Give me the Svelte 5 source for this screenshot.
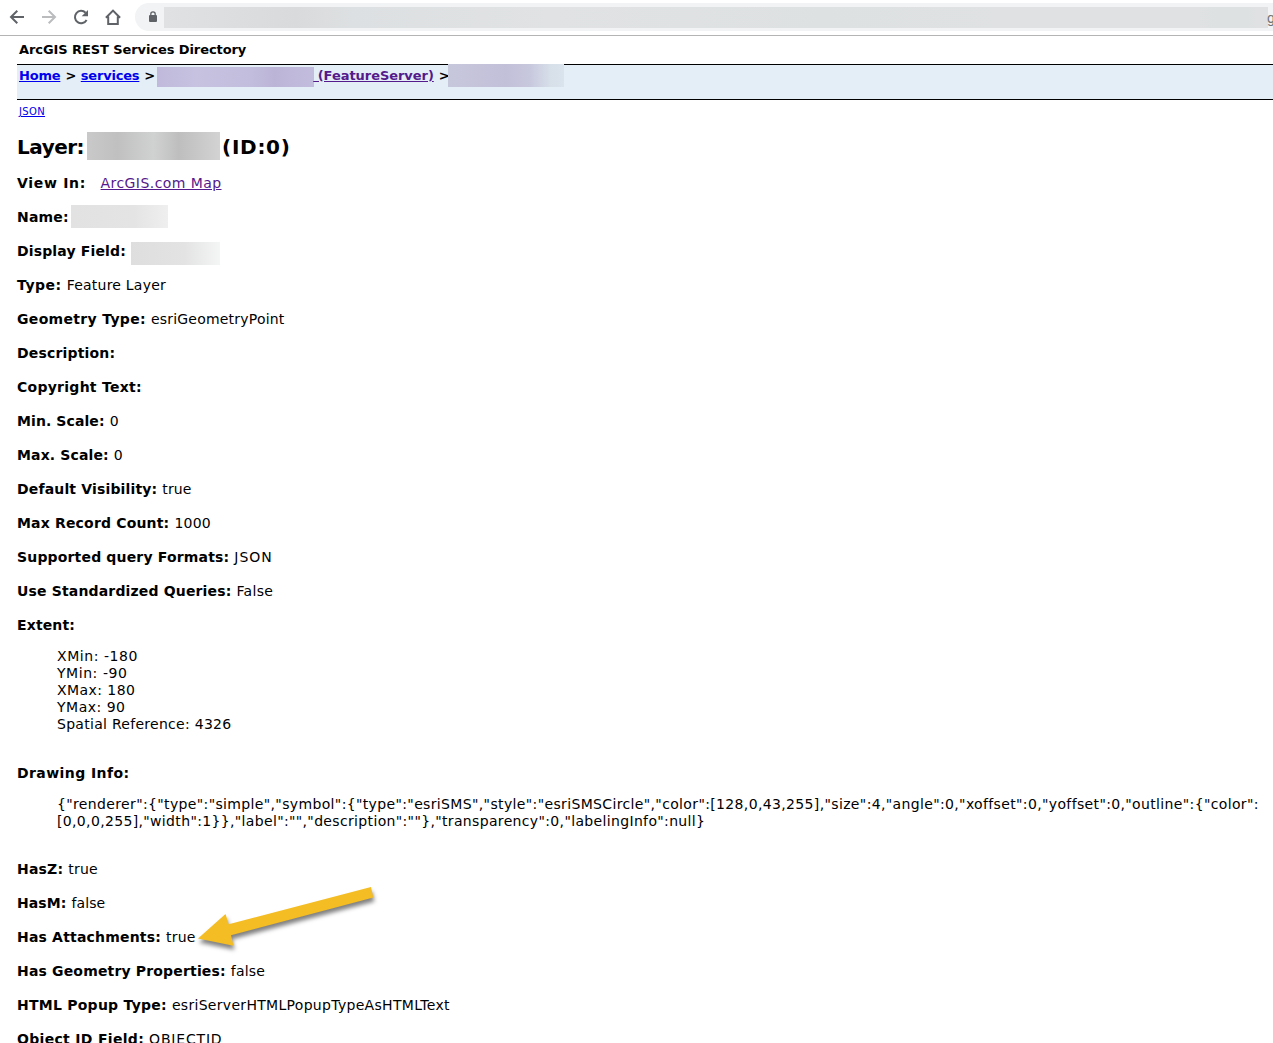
<script>
  // Each field: label, value, then the extra tracking (total px) for both parts.
  const before = [
    ['Type:', 'Feature Layer', 2.5, 3],
    ['Geometry Type:', 'esriGeometryPoint', 4.5, 3.5],
    ['Description:', '', 2, 0],
    ['Copyright Text:', '', 4, 0],
    ['Min. Scale:', '0', 1, 0],
    ['Max. Scale:', '0', 1.5, 0],
    ['Default Visibility:', 'true', 3, 0.5],
    ['Max Record Count:', '1000', 3, 1],
    ['Supported query Formats:', 'JSON', 4, 4],
    ['Use Standardized Queries:', 'False', 4, 1.5],
    ['Extent:', '', 1, 0]
  ];
  const extent = [
    ['XMin: -180', 5.5],
    ['YMin: -90', 5],
    ['XMax: 180', 4],
    ['YMax: 90', 4],
    ['Spatial Reference: 4326', 6.5]
  ];
  const drawing = [
    ['{"renderer":{"type":"simple","symbol":{"type":"esriSMS","style":"esriSMSCircle","color":[128,0,43,255],"size":4,"angle":0,"xoffset":0,"yoffset":0,"outline":{"color":', 58.5],
    ['[0,0,0,255],"width":1}},"label":"","description":""},"transparency":0,"labelingInfo":null}', 31]
  ];
  const after = [
    ['HasZ:', 'true', 1, 1],
    ['HasM:', 'false', 0.5, 0.5],
    ['Has Attachments:', 'true', 3, 1],
    ['Has Geometry Properties:', 'false', 4, 1],
    ['HTML Popup Type:', 'esriServerHTMLPopupTypeAsHTMLText', 4, 10],
    ['Object ID Field:', 'OBJECTID', 5, 6.5]
  ];
  const track = (text, extra) => `${(extra / text.length).toFixed(3)}px`;
</script>

{#snippet field([label, value, labelExtra, valueExtra])}
  <div class="row">
    <b style:letter-spacing={track(label, labelExtra)}>{label}</b>
    {#if value}<span class="value" style:letter-spacing={track(value, valueExtra)}>{value}</span>{/if}
  </div>
{/snippet}

{#snippet block(lines)}
  <div class="block">
    {#each lines as [line, extra]}<div style:letter-spacing={track(line, extra)}>{line}</div>{/each}
  </div>
{/snippet}

<div class="page">
  <header class="toolbar">
    <svg class="nav" viewBox="0 0 16 16"><path d="M15 8H2M8.3 1.7 2 8l6.300 6.300" /></svg>
    <svg class="nav dim" viewBox="0 0 16 16"><path d="M1 8h13M7.700 1.700 14 8l-6.300 6.300" /></svg>
    <svg class="nav" viewBox="0 0 16 16"><path d="M13.600 11A6.200 6.200 0 1 1 12.600 3.700" /><path class="solid" d="M15 1v6.300H8.700z" /></svg>
    <svg class="nav" viewBox="0 0 16 16"><path d="M.9 8.700 8 1.600l7.100 7.100M3.200 7.500v7.600h9.600V7.500" /></svg>
    <div class="omnibox">
      <svg class="lock" viewBox="0 0 8 11"><rect y="4" width="8" height="7" rx="1" /><path d="M1.800 4.500V3a2.200 2.200 0 0 1 4.400 0v1.500" /></svg>
      <div class="redact url"></div>
      <span class="tail">g</span>
    </div>
  </header>

  <div class="title">ArcGIS REST Services Directory</div>
  <nav class="crumbs">
    <a class="home" href="#home">Home</a><span class="gt">&gt;</span><a class="services" href="#services">services</a><span class="gt">&gt;</span>
    <div class="redact service"></div>
    <a class="visited server" href="#server">&nbsp;(FeatureServer)</a><span class="gt last">&gt;</span>
    <div class="redact layer"></div>
  </nav>
  <a class="json" href="#json">JSON</a>

  <main>
    <h2><span class="layer-word">Layer:</span><span class="redact heading"></span><span class="layer-id">(ID:0)</span></h2>
    <div class="row"><b class="view">View In:</b><a class="visited map" href="#map">ArcGIS.com Map</a></div>
    <div class="row"><b class="name-label">Name:</b><span class="redact name"></span></div>
    <div class="row"><b class="display-label">Display Field:</b><span class="redact display"></span></div>
    {#each before as item}{@render field(item)}{/each}
    {@render block(extent)}
    {@render field(['Drawing Info:', '', 5.5, 0])}
    {@render block(drawing)}
    <div class="tail-fields">
      {#each after as item}{@render field(item)}{/each}
    </div>
  </main>

  <svg class="arrow" viewBox="0 0 190 80"><path d="M3 58.500 30.500 34l3.200 10.300L176 7l2.300 10.600L36 55.300 38.500 65.700z" /></svg>
</div>

<style>
  .page {
    position: relative;
    width: 1273px;
    height: 1043px;
    overflow: hidden;
    background: #fff;
    color: #000;
    font: 14px/17px 'DejaVu Sans', Verdana, sans-serif;
    white-space: nowrap;
  }
  .toolbar {
    box-sizing: border-box;
    display: flex;
    align-items: center;
    gap: 16px;
    height: 36px;
    padding: 0 0 2px 9px;
    border-bottom: 1px solid #b4b4b4;
  }
  .nav {
    flex: none;
    width: 16px;
    height: 16px;
    fill: none;
    stroke: #5f6368;
    stroke-width: 2;
  }
  .dim { stroke: #babcbe; }
  .solid { fill: #5f6368; stroke: none; }
  .omnibox {
    display: flex;
    align-items: center;
    flex: none;
    width: 1160px;
    height: 28px;
    margin-left: -2px;
    border-radius: 14px 0 0 14px;
    background: #f1f3f4;
  }
  .lock { flex: none; width: 8px; height: 11px; margin: 0 7px 0 14px; fill: #5f6368; }
  .lock path { fill: none; stroke: #5f6368; stroke-width: 1.3; }
  .redact { flex: none; }
  .url {
    width: 1104px;
    height: 21px;
    margin-top: 1px;
    background: linear-gradient(90deg, #dfe1e2, #d9dadb 12%, #dde0e2 17%, #e0e2e3 35%, #dee1e2 60%, #e0e1e2 92%, #dde1e2 97%, #e0e1e2);
  }
  .tail { margin: 3px 0 0 -1px; color: #70757a; font: 14px/17px Roboto, sans-serif; }
  .title {
    height: 17px;
    padding: 5px 0 6px 19px;
    font-weight: bold;
    font-size: 13px;
    letter-spacing: -0.085px;
  }
  .crumbs {
    box-sizing: border-box;
    display: flex;
    height: 36px;
    margin-left: 17px;
    padding: 2px 0 0 2px;
    border: solid #000;
    border-width: 1px 0;
    background: #e4eef7;
    font-weight: bold;
    font-size: 13px;
  }
  a { color: #00e; text-underline-offset: 1px; }
  a.visited { color: #551a8b; }
  .home { letter-spacing: -0.2px; }
  .services { letter-spacing: -0.2px; }
  .gt { margin: 0 4.500px 0 5px; }
  .service {
    width: 157px;
    height: 20px;
    margin-left: -3px;
    background: linear-gradient(90deg, #c0b9db, #c7c2e0 25%, #c2bddc 60%, #bcb4d7 75%, #bfb8da 85%, #c2bcdd);
  }
  .server { margin-left: -0.500px; letter-spacing: -0.050px; }
  .layer {
    width: 116px;
    height: 23px;
    margin-top: -3px;
    background: linear-gradient(90deg, #c7c7dc, #c2c0d9 50%, #c7c7dd 70%, #d7dfe9 88%, #dae4ed);
  }
  .gt.last { margin-right: -2px; }
  .json { display: block; width: 26px; margin: 4px 0 0 19px; font-size: 10px; line-height: 15px; letter-spacing: 0.350px; }
  main { padding-left: 17px; }
  h2 { display: flex; align-items: center; height: 28px; margin: 13px 0 15px; font-size: 20px; line-height: 28px; }
  .layer-word { padding-top: 2px; letter-spacing: -0.500px; }
  .layer-id { padding-top: 2px; letter-spacing: 0.700px; }
  .heading {
    width: 133px;
    height: 28px;
    margin: 0 2px 0 3px;
    background: linear-gradient(90deg, #c9c9c9, #c0c0c0 23%, #d0d2d1 50%, #bebebe 69%, #d3d3d3);
  }
  .row { display: flex; height: 17px; margin-bottom: 17px; }
  .value { margin-left: 5px; }
  .view { letter-spacing: 0.700px; }
  .map { margin-left: 14.500px; letter-spacing: 0.430px; }
  .name-label { letter-spacing: 0.200px; }
  .display-label { letter-spacing: 0.150px; }
  .name { width: 97px; height: 23px; margin: -4px 0 0 2px; background: linear-gradient(90deg, #e2e2e2, #e4e4e4 65%, #efefef); }
  .display { width: 89px; height: 23px; margin: -1px 0 0 5px; background: linear-gradient(90deg, #dedede, #e3e3e3 60%, #f4f5f5); }
  .block { margin: -3px 0 32px 40px; }
  .tail-fields { margin-top: -1px; }
  .arrow {
    position: absolute;
    left: 195px;
    top: 880px;
    width: 190px;
    height: 80px;
    overflow: visible;
    fill: #f4bd23;
    filter: drop-shadow(1px 4px 2px rgba(0, 0, 0, 0.5));
  }
</style>
